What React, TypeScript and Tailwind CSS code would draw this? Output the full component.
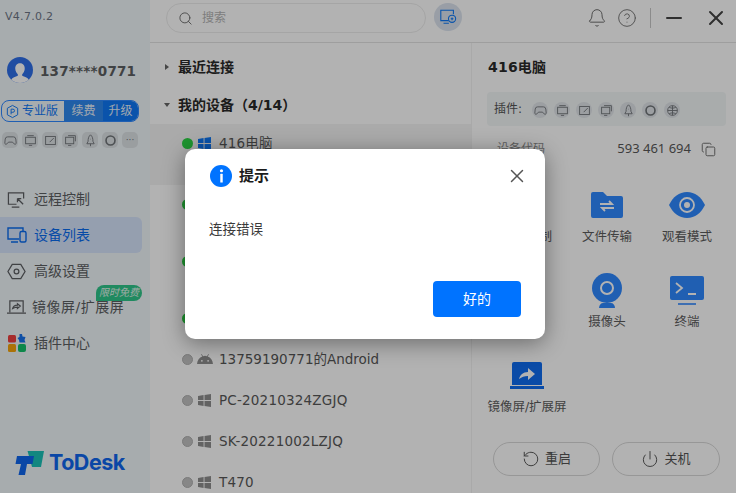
import React from 'react';
import { Bell, CircleHelp, Copy, Minus, Power, RotateCw, Search, X } from 'lucide-react';

const CJK = "font-['DejaVu_Sans','Noto_Sans_CJK_SC',sans-serif]";

type IconProps = { className?: string };

const WinIcon: React.FC<IconProps> = ({ className }) => (
  <svg viewBox="0 0 14 14" className={className} fill="currentColor">
    <path d="M0 2.2 6 1.2V6.5H0ZM7 1 14 0V6.5H7ZM0 7.5H6V12.8L0 11.8ZM7 7.5H14V14L7 13Z" />
  </svg>
);

const AndroidIcon: React.FC<IconProps> = ({ className }) => (
  <svg viewBox="0 0 18 11" className={className} fill="currentColor">
    <path d="M0 11C.3 7 2.6 3.8 6 2.6L4.6.4 5.2 0 6.8 2.3a7 7 0 0 1 4.400 0L12.800 0l.6.4L12 2.600c3.400 1.200 5.700 4.400 6 8.400ZM5.500 6.500a1 1 0 1 0 0 2 1 1 0 0 0 0-2Zm7 0a1 1 0 1 0 0 2 1 1 0 0 0 0-2Z" />
  </svg>
);

// small plugin glyphs, shared by the sidebar strip and the detail panel
const pluginPaths: React.ReactNode[] = [
  <path key="a" d="M4.500 3.500h7a3 3 0 0 1 3 2.700l.5 4.800c.2 1.500-1.500 2.200-2.500 1.200L10.500 10h-5L3.500 12.200c-1 1-2.700.3-2.500-1.200l.5-4.800a3 3 0 0 1 3-2.700Z" />,
  <g key="b"><rect x="2" y="4" width="12" height="8" /><path d="M4 2h8M6 14h4" /></g>,
  <g key="c"><rect x="2" y="3" width="12" height="10" /><path d="M7 10l5-5" /></g>,
  <g key="d"><path d="M5 2h9v7" /><rect x="2" y="4" width="10" height="8" /><path d="M5 14h4" /></g>,
  <path key="e" d="M8 1c2.500 2 3 5 3 8l1.500 3h-9L5 9c0-3 .5-6 3-8ZM8 12v3M8 6v.5" />,
  <circle key="f" cx="8" cy="8" r="5.500" strokeWidth="2" />,
];

const globePath = (
  <g key="g"><circle cx="8" cy="8" r="6" /><path d="M2 8h12M8 2v12M4 4c2.500 1.500 5.500 1.500 8 0M4 12c2.500-1.500 5.500-1.500 8 0" /></g>
);

const PluginChip: React.FC<{ children: React.ReactNode; shape: string; tone: string }> = ({ children, shape, tone }) => (
  <span className={`flex h-4 w-4 items-center justify-center ${shape} ${tone}`}>
    <svg viewBox="0 0 16 16" className="h-[13px] w-[13px] text-[#6f7478]" fill="none" stroke="currentColor" strokeWidth="1.100">
      {children}
    </svg>
  </span>
);

const NavItem: React.FC<{ icon: React.ReactNode; label: string; active?: boolean; tight?: boolean }> = ({ icon, label, active, tight }) => (
  <div className={`flex h-9 w-[142px] items-center rounded-r-md pl-[6px] ${active ? 'bg-[#d6e4fb] text-[#0a6cf0]' : 'text-[#5c5f62]'}`}>
    <span className="flex w-[21px] justify-center">{icon}</span>
    <span className={`${tight ? 'ml-[5px] tracking-[0.5px]' : 'ml-[7px]'} whitespace-nowrap text-sm`}>{label}</span>
  </div>
);

const DeviceRow: React.FC<{ name: string; h: string; online?: boolean; selected?: boolean; android?: boolean }> = ({ name, h, online, selected, android }) => (
  <div className={`flex items-start pl-[32px] ${h} ${selected ? 'bg-[#f4f4f4]' : ''}`}>
    <div className="mt-[13px] flex h-3 items-center">
      <span className={`h-[11px] w-[11px] rounded-full ${online ? 'bg-[#2bd444]' : 'border border-[#b0b0b0] bg-[#c2c2c2]'}`} />
    </div>
    <div className="ml-[3px] mt-[10px] flex h-[18px] w-[17px] items-center justify-center">
      {android ? <AndroidIcon className="h-[10px] w-4 text-[#8f8f8f]" /> : <WinIcon className={`h-[13px] w-[13px] ${online ? 'text-[#0f78f5]' : 'text-[#8f8f8f]'}`} />}
    </div>
    <span className={`ml-[6px] mt-[10px] h-[18px] text-[13.500px] leading-[18px] text-[#585858] ${android ? '' : 'tracking-[0.2px]'}`}>{name}</span>
  </div>
);

const FeatureIcon: React.FC<{ kind: string }> = ({ kind }) => {
  if (kind === 'file') {
    return (
      <svg viewBox="0 0 32 26" className="h-[26px] w-8">
        <path d="M2 0h10l4 4h14a2 2 0 0 1 2 2v18a2 2 0 0 1-2 2H2a2 2 0 0 1-2-2V2a2 2 0 0 1 2-2Z" fill="#2f88ff" />
        <path d="M9 12h12l-3-3M23 16H11l3 3" fill="none" stroke="#fff" strokeWidth="1.800" />
      </svg>
    );
  }
  if (kind === 'eye') {
    return (
      <svg viewBox="0 0 36 26" className="h-[26px] w-9">
        <path d="M0 13C4 5 10 0 18 0s14 5 18 13c-4 8-10 13-18 13S4 21 0 13Z" fill="#2f88ff" />
        <circle cx="18" cy="13" r="7" fill="none" stroke="#fff" strokeWidth="1.800" />
        <circle cx="18" cy="13" r="3" fill="#fff" />
      </svg>
    );
  }
  if (kind === 'camera') {
    return (
      <svg viewBox="0 0 30 35" className="h-[35px] w-[30px]">
        <circle cx="15" cy="15" r="15" fill="#2f88ff" />
        <circle cx="15" cy="15" r="6" fill="none" stroke="#fff" strokeWidth="2" />
        <path d="M7 35c0-3 2-5 4-5h8c2 0 4 2 4 5Z" fill="#2f88ff" />
      </svg>
    );
  }
  if (kind === 'terminal') {
    return (
      <svg viewBox="0 0 34 29" className="h-[29px] w-[34px]">
        <rect width="34" height="24" rx="2" fill="#2f88ff" />
        <path d="M6 7l6 5-6 5M18 18h8" fill="none" stroke="#fff" strokeWidth="1.800" />
        <path d="M8 28h18" stroke="#2f88ff" strokeWidth="1.600" />
      </svg>
    );
  }
  if (kind === 'mirror') {
    return (
      <svg viewBox="0 0 34 27" className="h-[27px] w-[34px]">
        <path d="M4 0h26a2 2 0 0 1 2 2v21H2V2a2 2 0 0 1 2-2Z" fill="#0f6cf0" />
        <rect y="24" width="34" height="3" fill="#0f6cf0" />
        <path d="M9 17c1-4 4-7 9-7V6l7 6-7 6v-4c-4 0-6 1-9 3Z" fill="#fff" />
      </svg>
    );
  }
  return <span className="h-[26px] w-8" />;
};

const features = [
  { kind: 'remote', label: '远程控制' },
  { kind: 'file', label: '文件传输' },
  { kind: 'eye', label: '观看模式' },
  { kind: 'hidden', label: '' },
  { kind: 'camera', label: '摄像头' },
  { kind: 'terminal', label: '终端' },
  { kind: 'mirror', label: '镜像屏/扩展屏' },
];

// rows two to four sit behind the dialog, only their status dots show
const devices = [
  { id: 1, name: '416电脑', h: 'h-[61px]', online: true, selected: true },
  { id: 2, name: '', h: 'h-[57px]', online: true },
  { id: 3, name: '', h: 'h-[57px]', online: true },
  { id: 4, name: '', h: 'h-[41px]', online: true },
  { id: 5, name: '13759190771的Android', h: 'h-[41px]', android: true },
  { id: 6, name: 'PC-20210324ZGJQ', h: 'h-[41px]' },
  { id: 7, name: 'SK-20221002LZJQ', h: 'h-[41px]' },
  { id: 8, name: 'T470', h: 'h-[41px]' },
];

const App: React.FC = () => {
  return (
    <div className={`relative flex h-[493px] w-[736px] overflow-hidden bg-white ${CJK}`}>
      {/* Sidebar */}
      <aside className="flex h-full w-[150px] shrink-0 flex-col bg-[#f0f6fa]">
        <div className="pl-[5px] pt-[10px] text-[11px] leading-[14px] tracking-[0.3px] text-[#6d7686]">V4.7.0.2</div>

        <div className="mt-[33px] flex items-center pl-[7px]">
          <span className="flex h-[26px] w-[26px] items-end justify-center overflow-hidden rounded-full bg-[#2f6fe8]">
            <svg viewBox="0 0 20 20" className="h-[22px] w-[22px]" fill="#fff">
              <path d="M10 2c3 0 4.500 2.500 4.300 5.200-.1 2-1.200 3.800-2.300 4.800v1.500c2 .8 5 1.500 6 3.500V20H2v-3c1-2 4-2.700 6-3.500V12C6.900 11 5.800 9.200 5.700 7.200 5.500 4.500 7 2 10 2Z" />
            </svg>
          </span>
          <span className="ml-[7px] mt-[2px] text-[13.500px] font-bold tracking-[0.2px] text-[#5c5f62]">137****0771</span>
        </div>

        <div className="ml-[1px] mt-[17px] flex h-[22px] w-[138px] items-center overflow-hidden rounded-lg border border-[#2f88ff] text-xs">
          <div className="flex flex-1 items-center pl-[3px] text-[#0f78f5]">
            <svg viewBox="0 0 16 16" className="h-[15px] w-[15px]" fill="none" stroke="currentColor">
              <path d="M8 1.500 13.500 4.500v7L8 14.500 2.500 11.500v-7Z" />
              <path d="M6.500 11V5.500h2a1.500 1.500 0 0 1 0 3.300h-2" />
            </svg>
            <span className="ml-[2px]">专业版</span>
          </div>
          <div className="flex h-full w-[39px] items-center justify-center bg-[#2f88ee] text-[#e6f0fa]">续费</div>
          <div className="flex h-full w-[35px] items-center justify-center bg-[#0f78f5] text-[#e6f0fa]">升级</div>
        </div>

        <div className="ml-[2px] mt-[10px] flex gap-[4px]">
          {pluginPaths.map((p, i) => (
            <PluginChip key={i} shape="rounded-[5px]" tone="bg-[#dde2e6]">{p}</PluginChip>
          ))}
          <span className="flex h-4 w-4 items-center justify-center rounded-[5px] bg-[#dde2e6] text-[9px] leading-none text-[#6f7478]">···</span>
        </div>

        <nav className="relative mt-[33px] flex flex-col">
          <NavItem
            label="远程控制"
            icon={
              <svg viewBox="0 0 20 20" className="h-[19px] w-[19px]" fill="none" stroke="currentColor" strokeWidth="1.300">
                <path d="M17.500 9V3H1.500v12H10M5 18h8M11 9l6 6M11 9v4M11 9h4" />
              </svg>
            }
          />
          <NavItem
            active
            label="设备列表"
            icon={
              <svg viewBox="0 0 20 20" className="h-[20px] w-[20px]" fill="none" stroke="currentColor" strokeWidth="1.400">
                <path d="M12 14H1V3h15v3M4 17h7" />
                <rect x="13" y="6.500" width="6" height="10.500" rx="1.500" />
              </svg>
            }
          />
          <NavItem
            label="高级设置"
            icon={
              <svg viewBox="0 0 20 20" className="h-[19px] w-[19px]" fill="none" stroke="currentColor" strokeWidth="1.300">
                <path d="M5.500 2.500h9L19 10l-4.500 7.500h-9L1 10Z" />
                <circle cx="10" cy="10" r="2.500" />
              </svg>
            }
          />
          <NavItem
            tight
            label="镜像屏/扩展屏"
            icon={
              <svg viewBox="0 0 20 20" className="h-[19px] w-[19px]" fill="none" stroke="currentColor" strokeWidth="1.300">
                <path d="M3 15V3h14v12M0 16h20M6 11c.5-2 2-3.500 5-3.500V6l3 2.500L11 11V9.500c-2 0-3.500.5-5 1.500Z" />
              </svg>
            }
          />
          <NavItem
            label="插件中心"
            icon={
              <svg viewBox="0 0 18 18" className="h-[18px] w-[18px]">
                <rect x="0" y="1" width="8" height="7.500" rx="1.500" fill="#ee3f3f" />
                <path d="M11.500 0h2.500l.5 2.500L17.500 3l-1 3 1 2.500h-6l-.5-2.500L9.500 4l2-1Z" fill="#1672ec" />
                <rect x="0" y="10" width="8" height="8" rx="1.500" fill="#f5a40c" />
                <rect x="10" y="10" width="8" height="8" rx="2" fill="#13c26b" />
              </svg>
            }
          />
          <span className="absolute left-[96px] top-[104px] flex h-4 w-[46px] items-center justify-center rounded-t-lg rounded-br-lg bg-[#2fc68a] text-[10px] italic leading-none text-[#e4f5ee]">
            限时免费
          </span>
        </nav>

        <div className="mt-auto flex items-center pb-[17px] pl-[15px]">
          <svg viewBox="0 0 30 26" className="h-[26px] w-[30px]">
            <path d="M12.500 1H29l-3 16h-9Z" fill="#1bc2b8" />
            <path d="M2 6h17l-1.500 8H12L10 25H3.500L6 14H0.500Z" fill="#0f66ee" />
          </svg>
          <span className="ml-[4px] font-['Inter',sans-serif] text-[21.500px] font-bold leading-none tracking-[-0.5px] text-[#0f66ee]">ToDesk</span>
        </div>
      </aside>

      {/* Main */}
      <div className="flex min-w-0 flex-1 flex-col">
        <header className="flex h-[43px] shrink-0 items-start border-b border-[#e2e2e2] pl-[16px]">
          <div className="mt-[3px] flex h-[30px] w-[260px] items-center rounded-full border border-[#ececec] pl-[11px]">
            <Search className="h-[15px] w-[15px] text-[#6c6c6c]" strokeWidth={1.500} />
            <span className="ml-[9px] text-xs text-[#b4b4b4]">搜索</span>
          </div>
          <span className="ml-2 mt-[3px] flex h-7 w-7 items-center justify-center rounded-full bg-[#dbe3ee]">
            <svg viewBox="0 0 20 20" className="h-[18px] w-[18px] text-[#0f78f5]" fill="none" stroke="currentColor" strokeWidth="1.200">
              <path d="M11 14H2V2.500h14V7M5 17h6" />
              <circle cx="14.500" cy="12" r="4" fill="#dbe3ee" />
              <path d="M13 12h3M14.500 10.500v3" />
            </svg>
          </span>
          <div className="ml-auto mt-[5px] flex h-[26px] items-center pr-2">
            <Bell className="h-5 w-5 text-[#6e6e6e]" strokeWidth={1.200} />
            <CircleHelp className="ml-[10px] h-5 w-5 text-[#6e6e6e]" strokeWidth={1.100} />
            <span className="ml-[13px] h-5 w-px bg-[#c8c8c8]" />
            <Minus className="ml-[11px] h-6 w-6 text-[#444]" strokeWidth={2} />
            <X className="ml-[18px] h-6 w-6 text-[#444]" strokeWidth={2} />
          </div>
        </header>

        <div className="flex min-h-0 flex-1">
          {/* Device list */}
          <section className="w-[322px] shrink-0 overflow-hidden border-r border-[#f2f2f2]">
            <div className="flex h-[48px] items-center pb-[1px] pl-[15px]">
              <span className="h-0 w-0 border-y-[3px] border-l-[4px] border-y-transparent border-l-[#666]" />
              <span className="ml-[9px] text-sm font-bold text-[#2a2a2a]">最近连接</span>
            </div>
            <div className="flex h-[33px] items-start pl-[14px] pt-[4px]">
              <span className="mt-[8px] h-0 w-0 border-x-[3px] border-t-[4px] border-x-transparent border-t-[#666]" />
              <span className="ml-[8px] text-sm font-bold leading-5 text-[#2a2a2a]">我的设备（4/14）</span>
            </div>
            {devices.map((d) => (
              <DeviceRow key={d.id} {...d} />
            ))}
          </section>

          {/* Device detail */}
          <section className="flex min-w-0 flex-1 flex-col px-[15px]">
            <h2 className="ml-[1px] mt-[14px] h-5 text-sm font-bold leading-5 tracking-[0.2px] text-[#2a2a2a]">416电脑</h2>
            <div className="mt-[15px] flex h-[34px] w-[239px] items-center rounded-sm bg-[#f2f6f7] pl-[7px]">
              <span className="text-xs text-[#555]">插件:</span>
              <div className="ml-[10px] mt-[2px] flex gap-[6px]">
                {[...pluginPaths, globePath].map((p, i) => (
                  <PluginChip key={i} shape="rounded-full" tone="bg-[#e0e4e8]">{p}</PluginChip>
                ))}
              </div>
            </div>
            <div className="mt-[13px] flex h-[20px] items-center pl-[10px] pr-[5px] text-[#585858]">
              <span className="text-xs text-[#8a8a8a]">设备代码</span>
              <span className="ml-auto font-['Noto_Sans',sans-serif] text-[13px]">593 461 694</span>
              <Copy className="ml-[10px] h-[15px] w-[15px] text-[#6a6a6a]" strokeWidth={1.500} />
            </div>

            <div className="mt-[25px] grid grid-cols-[80px_80px_80px] gap-y-[14px]">
              {features.map((f) => (
                <div key={f.kind} className="flex h-[71px] w-[80px] flex-col items-center">
                  <div className="flex h-[42px] items-center justify-center">
                    <FeatureIcon kind={f.kind} />
                  </div>
                  <span className="mt-[2px] whitespace-nowrap text-[12.500px] text-[#5c5c5c]">{f.label}</span>
                </div>
              ))}
            </div>

            <div className="mb-[17px] ml-[6px] mt-auto flex gap-3">
              <button className="flex h-[34px] w-[107px] items-center justify-center gap-[5px] rounded-full border border-[#d8d8d8] text-[13px] text-[#555]">
                <RotateCw className="h-[18px] w-[18px] -scale-x-100" strokeWidth={1.300} />
                重启
              </button>
              <button className="flex h-[34px] w-[108px] items-center justify-center gap-[5px] rounded-full border border-[#d8d8d8] text-[13px] text-[#555]">
                <Power className="h-[18px] w-[18px]" strokeWidth={1.300} />
                关机
              </button>
            </div>
          </section>
        </div>
      </div>

      {/* Dim layer + dialog */}
      <div className="absolute inset-0 bg-black/30" />
      <div className="absolute left-[185px] top-[149px] flex h-[190px] w-[360px] flex-col rounded-[10px] bg-white px-[24px] shadow-[0_4px_22px_rgba(0,0,0,0.4)]">
        <div className="mt-[15px] flex h-6 items-center pl-[1px]">
          <span className="flex h-[22px] w-[22px] items-center justify-center rounded-full bg-[#0073ff]">
            <svg viewBox="0 0 10 16" className="h-[14px] w-[9px]" fill="#fff">
              <circle cx="5" cy="2" r="1.800" />
              <rect x="3.600" y="5.500" width="2.800" height="10" rx="0.500" />
            </svg>
          </span>
          <span className="ml-[7px] text-[15px] font-bold text-[#1c1c1c]">提示</span>
          <X className="-mr-[7px] ml-auto h-[22px] w-[22px] text-[#555]" strokeWidth={1.600} />
        </div>
        <p className="mt-[31px] text-[13.500px] leading-5 text-[#3a3a3a]">连接错误</p>
        <button className="mb-[22px] ml-auto mt-auto h-9 w-[88px] rounded bg-[#0073ff] text-sm text-white">好的</button>
      </div>
    </div>
  );
};

export default App;
